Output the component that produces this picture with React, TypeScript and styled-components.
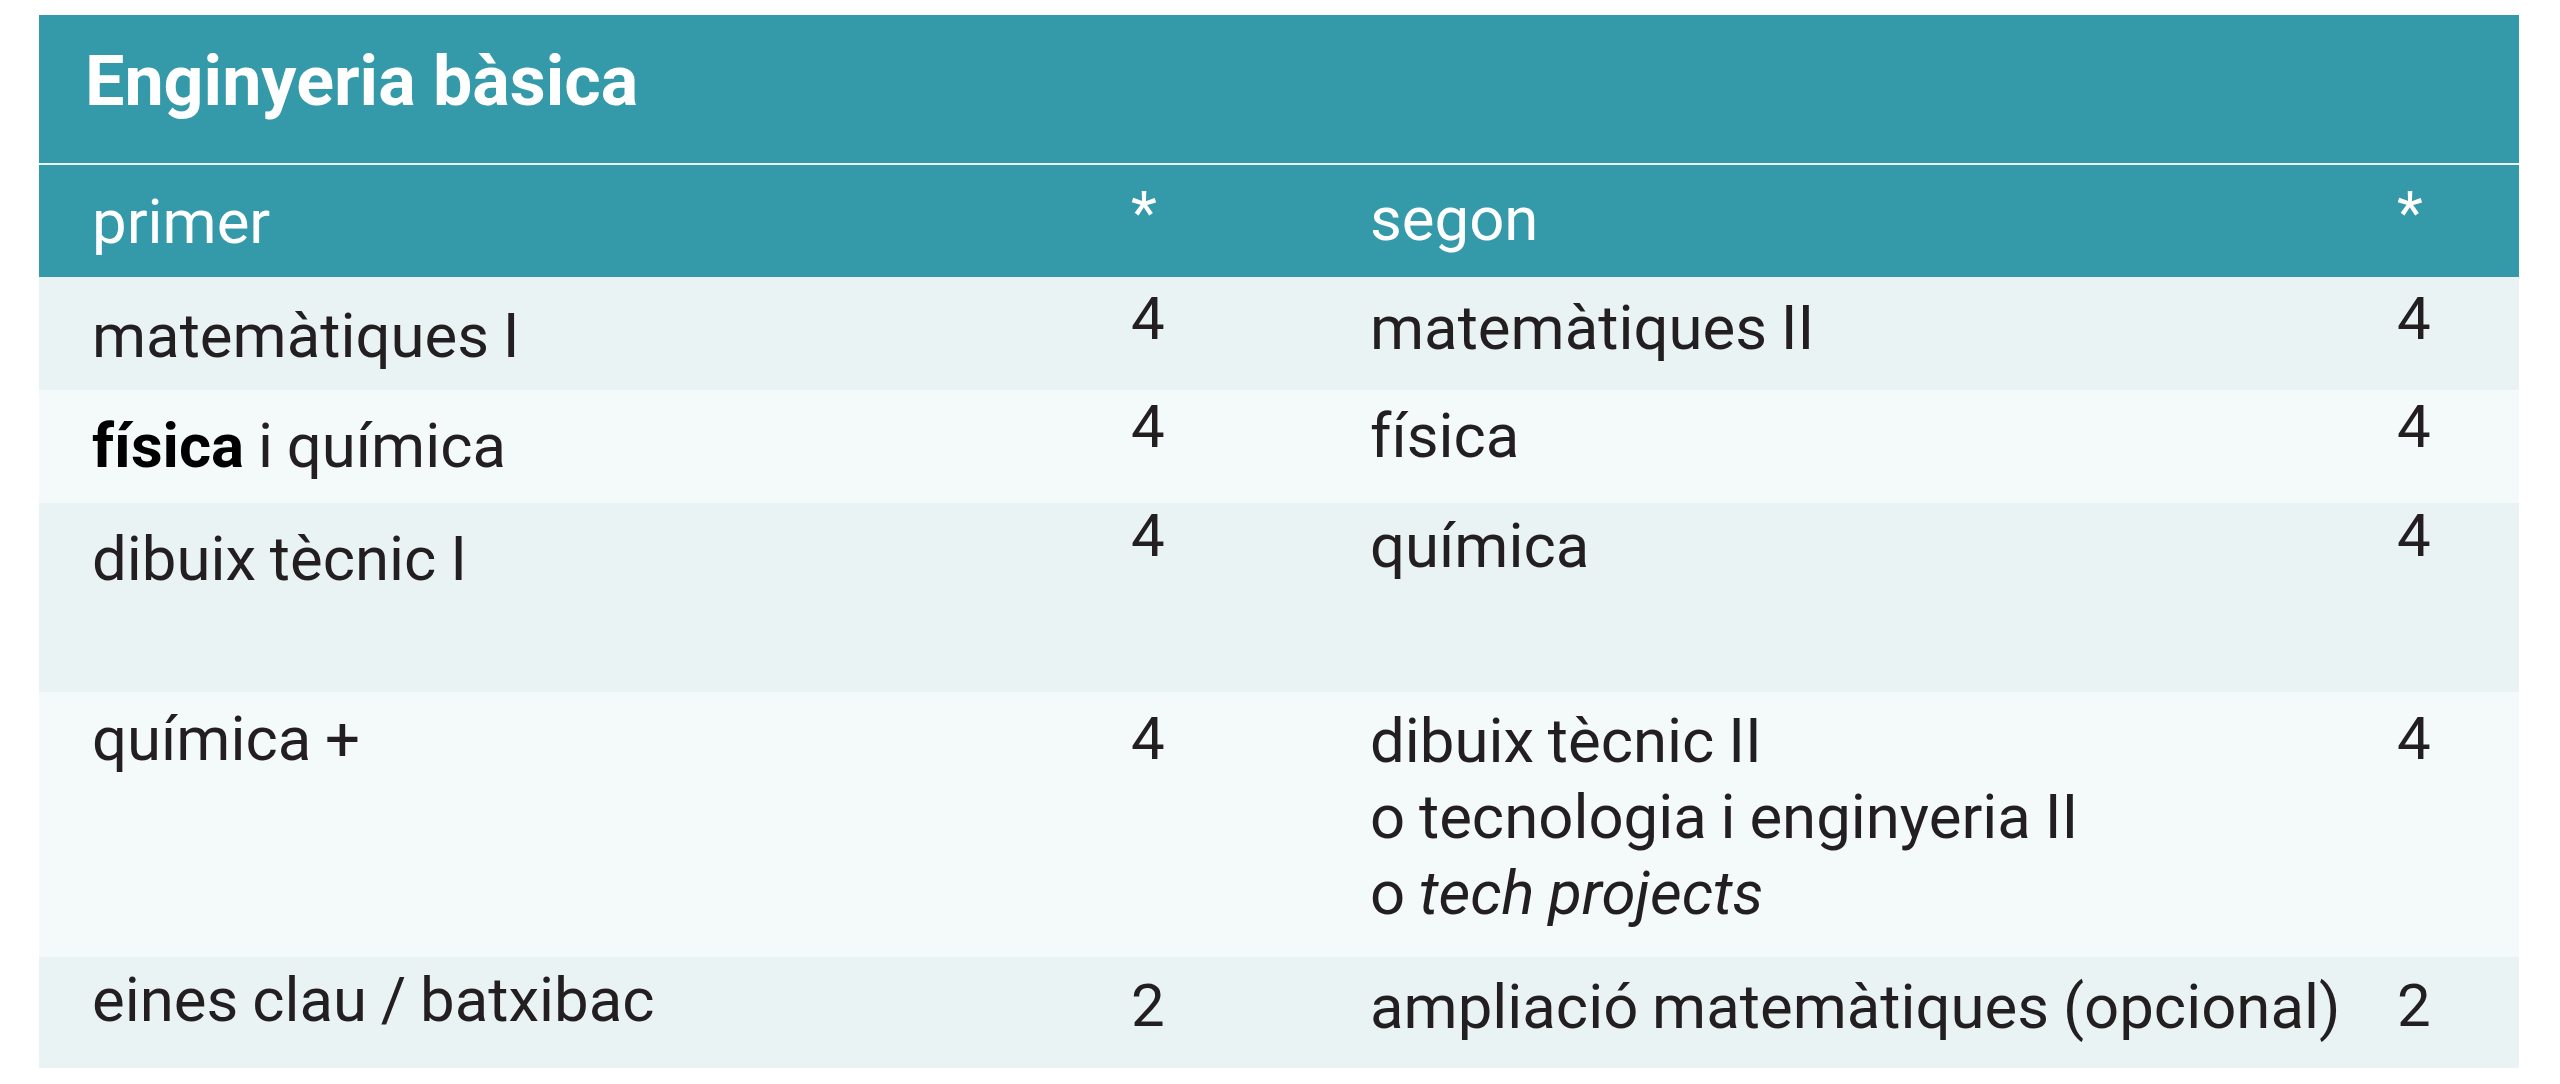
import React from 'react';
import styled, { createGlobalStyle } from 'styled-components';

const teal = '#3499a8';
const shadeA = '#eaf3f4';
const shadeB = '#f4f9f9';
const ink = '#231f20';

const GlobalStyle = createGlobalStyle`
    html, body {
        margin: 0;
        padding: 0;
        background: #ffffff;
    }
    body {
        font-family: Roboto, "Liberation Sans", Arial, sans-serif;
        color: ${ink};
    }
`;

const Page = styled.div`
    padding: 15px 0 0 39px;
`;

const Table = styled.section`
    width: 2480px;
    box-sizing: border-box;
`;

const TitleBar = styled.h2`
    margin: 0;
    height: 150px;
    box-sizing: border-box;
    padding: 31px 0 0 46px;
    background: ${teal};
    border-bottom: 2px solid #eef6f7;
    color: #ffffff;
    font-size: 70px;
    line-height: 70px;
    font-weight: 700;
    letter-spacing: 0;
`;

const Row = styled.div<{ $height: number; $bg: string; $head?: boolean }>`
    display: grid;
    grid-template-columns: 1039px 239px 1027px 1fr;
    padding-left: 53px;
    height: ${({ $height }) => $height}px;
    box-sizing: border-box;
    background: ${({ $bg }) => $bg};
    color: ${({ $head }) => ($head ? '#ffffff' : ink)};
`;

const Text = styled.div<{ $top: number }>`
    padding-top: ${({ $top }) => $top}px;
    font-size: 61.7px;
    line-height: 76px;
    font-weight: 400;
    word-spacing: -1.5px;
    white-space: nowrap;
`;

const Num = styled.div<{ $top: number }>`
    padding-top: ${({ $top }) => $top}px;
    font-size: 60px;
    line-height: 60px;
    font-weight: 400;
`;

const Strong = styled.b`
    font-weight: 700;
    color: #000000;
`;

const Em = styled.i`
    font-style: italic;
`;

type Cell = { content: React.ReactNode; top: number };

interface RowData {
    height: number;
    bg: string;
    left: Cell;
    n1: Cell;
    right: Cell;
    n2: Cell;
}

const rows: RowData[] = [
    {
        height: 113,
        bg: shadeA,
        left: { content: 'matemàtiques I', top: 21 },
        n1: { content: '4', top: 12 },
        right: { content: 'matemàtiques II', top: 13 },
        n2: { content: '4', top: 12 },
    },
    {
        height: 113,
        bg: shadeB,
        left: { content: <><Strong>física</Strong> i química</>, top: 18 },
        n1: { content: '4', top: 7 },
        right: { content: 'física', top: 8 },
        n2: { content: '4', top: 7 },
    },
    {
        height: 189,
        bg: shadeA,
        left: { content: 'dibuix tècnic I', top: 18 },
        n1: { content: '4', top: 3 },
        right: { content: 'química', top: 5 },
        n2: { content: '4', top: 3 },
    },
    {
        height: 265,
        bg: shadeB,
        left: { content: 'química +', top: 9 },
        n1: { content: '4', top: 17 },
        right: {
            content: (
                <>
                    dibuix tècnic II
                    <br />
                    o tecnologia i enginyeria II
                    <br />
                    o <Em>tech projects</Em>
                </>
            ),
            top: 11,
        },
        n2: { content: '4', top: 17 },
    },
    {
        height: 111,
        bg: shadeA,
        left: { content: 'eines clau / batxibac', top: 5 },
        n1: { content: '2', top: 19 },
        right: { content: 'ampliació matemàtiques (opcional)', top: 12 },
        n2: { content: '2', top: 19 },
    },
];

const App: React.FC = () => {
    return (
        <Page>
            <GlobalStyle />
            <Table>
                <TitleBar>Enginyeria bàsica</TitleBar>
                <Row $height={112} $bg={teal} $head>
                    <Text $top={19}>primer</Text>
                    <Num $top={18}>*</Num>
                    <Text $top={16}>segon</Text>
                    <Num $top={18}>*</Num>
                </Row>
                {rows.map((row, i) => (
                    <Row key={i} $height={row.height} $bg={row.bg}>
                        <Text $top={row.left.top}>{row.left.content}</Text>
                        <Num $top={row.n1.top}>{row.n1.content}</Num>
                        <Text $top={row.right.top}>{row.right.content}</Text>
                        <Num $top={row.n2.top}>{row.n2.content}</Num>
                    </Row>
                ))}
            </Table>
        </Page>
    );
};

export default App;
